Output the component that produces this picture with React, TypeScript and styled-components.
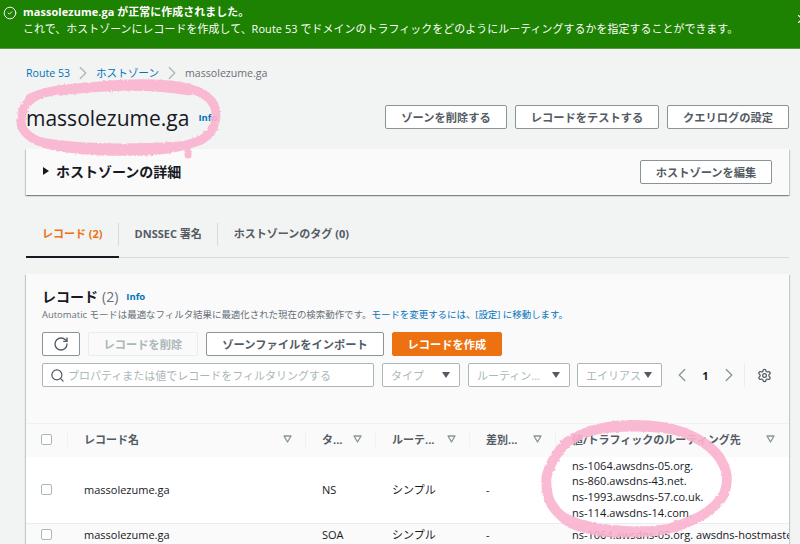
// App.tsx
import React from "react";
import styled, { createGlobalStyle } from "styled-components";
import { ChevronLeft, ChevronRight, CircleCheck, RotateCw, Search, Settings, X } from "lucide-react";

const GlobalStyle = createGlobalStyle`
  html, body {
    margin: 0;
    padding: 0;
    background: #f2f3f3;
    font-family: "Open Sans", "Noto Sans CJK JP", sans-serif;
    color: #16191f;
  }
  * { box-sizing: border-box; }
`;

const Page = styled.div`
  position: relative;
  width: 800px;
  height: 544px;
  overflow: hidden;
`;

const Banner = styled.div`
  display: flex;
  height: 49px;
  padding: 3px 0 0 3px;
  background: #1d8102;
  border-bottom: 1px solid #5c9a4b;
  color: #fff;
  overflow: hidden;
`;

const BannerIcon = styled.div`
  display: flex;
  flex: none;
  width: 20px;
  padding-top: 3px;
`;

const BannerText = styled.div`
  flex: 1;
  font-size: 10.9px;
  line-height: 17px;
  letter-spacing: 0.1px;
`;

const BannerTitle = styled.div`
  font-weight: 700;
`;

const BannerClose = styled.div`
  flex: none;
  width: 5px;
  padding-top: 6px;
  overflow: hidden;
`;

const Main = styled.div`
  padding: 0 11px 0 26px;
`;

const Breadcrumb = styled.nav`
  display: flex;
  align-items: center;
  height: 46px;
  padding-top: 1px;
  font-size: 10.6px;
  color: #687078;
`;

const Crumb = styled.span`
  color: #0073bb;
`;

const CrumbArrow = styled(ChevronRight)`
  width: 22px;
  height: 22px;
  margin: 0 2px;
  color: #aab7b8;
  stroke-width: 1.4;
`;

const HeaderRow = styled.div`
  display: flex;
  align-items: center;
  height: 34px;
  margin-top: 5px;
  gap: 8px;
`;

const PageTitle = styled.h1`
  margin: 2px 0 0;
  font-size: 21px;
  font-weight: 400;
  line-height: 34px;
  color: #16191f;
`;

const InfoLink = styled.a`
  color: #0073bb;
  font-size: 9.5px;
  font-weight: 700;
`;

const TitleGroup = styled.div`
  display: flex;
  align-items: center;
  gap: 9px;
  flex: 1;
`;

const Button = styled.button<{ $width: number }>`
  display: flex;
  flex: none;
  align-items: center;
  justify-content: center;
  width: ${(p) => p.$width}px;
  height: 24px;
  padding: 0;
  background: #fff;
  border: 1px solid #879596;
  border-radius: 2px;
  font-family: inherit;
  font-size: 11.25px;
  font-weight: 700;
  color: #545b64;
`;

const DisabledButton = styled(Button)`
  background: #fafafa;
  border-color: #eaeded;
  color: #aab7b8;
`;

const PrimaryButton = styled(Button)`
  background: #ec7211;
  border-color: #ec7211;
  color: #fff;
`;

const DetailsCard = styled.section`
  display: flex;
  align-items: center;
  justify-content: space-between;
  height: 46px;
  margin-top: 15px;
  padding: 0 17px;
  background: #fafafa;
  box-shadow: 0 1px 1px 0 rgba(0, 28, 36, 0.3), 1px 1px 1px 0 rgba(0, 28, 36, 0.15), -1px 1px 1px 0 rgba(0, 28, 36, 0.15);
`;

const DetailsTitle = styled.h2`
  display: flex;
  align-items: center;
  gap: 7px;
  margin: 0;
  padding-bottom: 2px;
  font-size: 14px;
  font-weight: 700;
  color: #16191f;
`;

const Caret = styled.span`
  width: 0;
  height: 0;
  border-left: 6px solid #16191f;
  border-top: 4px solid transparent;
  border-bottom: 4px solid transparent;
`;

const Tabs = styled.div`
  display: flex;
  height: 35px;
  margin-top: 28px;
  border-bottom: 1px solid #d5dbdb;
`;

const Tab = styled.div<{ $active?: boolean; $last?: boolean }>`
  position: relative;
  height: 35px;
  padding: 1px 16px 0;
  font-size: 11px;
  font-weight: 700;
  line-height: 20px;
  color: ${(p) => (p.$active ? "#ec7211" : "#545b64")};
  border-bottom: 2px solid ${(p) => (p.$active ? "#16191f" : "transparent")};

  ${(p) =>
    !p.$last &&
    `&::after {
      content: "";
      position: absolute;
      right: 0;
      top: 0;
      height: 23px;
      width: 1px;
      background: #d5dbdb;
    }`}
`;

const RecordsCard = styled.section`
  height: 280px;
  margin-top: 16px;
  background: #fafafa;
  box-shadow: 0 1px 1px 0 rgba(0, 28, 36, 0.3), 1px 1px 1px 0 rgba(0, 28, 36, 0.15), -1px 1px 1px 0 rgba(0, 28, 36, 0.15);
  overflow: hidden;
`;

const CardHead = styled.div`
  padding: 12px 16px 0;
`;

const CardTitle = styled.div`
  display: flex;
  align-items: center;
  height: 20px;
  font-size: 14px;
  font-weight: 700;
  color: #16191f;
`;

const Count = styled.span`
  margin-left: 4px;
  font-weight: 400;
  color: #687078;
`;

const CardInfo = styled(InfoLink)`
  margin-left: 8px;
`;

const Description = styled.p`
  margin: 0;
  font-size: 9.45px;
  line-height: 17px;
  color: #687078;
  white-space: nowrap;
`;

const Link = styled.span`
  color: #0073bb;
`;

const Actions = styled.div`
  display: flex;
  gap: 8px;
  margin-top: 9px;
`;

const Filters = styled.div`
  display: flex;
  align-items: center;
  margin-top: 7px;
  height: 24px;
`;

const SearchBox = styled.div`
  display: flex;
  flex: none;
  align-items: center;
  gap: 3px;
  width: 332px;
  height: 24px;
  padding: 0 7px;
  background: #fff;
  border: 1px solid #aab7b8;
  border-radius: 2px;
  font-size: 11px;
  color: #aab7b8;
`;

const SelectBox = styled.div<{ $width: number; $gap: number }>`
  display: flex;
  flex: none;
  align-items: center;
  justify-content: space-between;
  width: ${(p) => p.$width}px;
  height: 24px;
  margin-left: ${(p) => p.$gap}px;
  padding: 0 9px 0 8px;
  background: #fff;
  border: 1px solid #aab7b8;
  border-radius: 2px;
  font-size: 11px;
  color: #aab7b8;
  white-space: nowrap;
`;

const SolidArrow = styled.span`
  flex: none;
  width: 0;
  height: 0;
  border-top: 6px solid #545b64;
  border-left: 4px solid transparent;
  border-right: 4px solid transparent;
`;

const Pager = styled.div`
  display: flex;
  flex: none;
  align-items: center;
  margin-left: 9px;
  color: #879596;
`;

const PageNumber = styled.span`
  width: 25px;
  text-align: center;
  font-size: 11px;
  font-weight: 700;
  color: #16191f;
`;

const PagerDivider = styled.div`
  flex: none;
  width: 1px;
  height: 24px;
  margin: 0 12px 0 4px;
  background: #eaeded;
`;

const GearIcon = styled(Settings)`
  flex: none;
  width: 15px;
  height: 15px;
  color: #545b64;
`;

const Table = styled.div`
  margin-top: 36px;
`;

const COLUMNS = "42px 238px 70px 94px 86px 1fr";

const HeaderCells = styled.div`
  display: grid;
  grid-template-columns: ${COLUMNS};
  height: 34px;
  padding-bottom: 3px;
  align-items: center;
  background: #fafafa;
  border-top: 1px solid #f0f1f1;
`;

const HeadCell = styled.div<{ $last?: boolean }>`
  display: flex;
  align-items: center;
  justify-content: space-between;
  height: 16px;
  padding: 0 ${(p) => (p.$last ? 14 : 13)}px 0 16px;
  border-right: ${(p) => (p.$last ? "none" : "1px solid #f0f1f1")};
  font-size: 11px;
  font-weight: 700;
  color: #545b64;
  white-space: nowrap;
`;

const CheckCell = styled.div<{ $line?: boolean }>`
  height: 16px;
  display: flex;
  align-items: center;
  padding-left: 15px;
  border-right: ${(p) => (p.$line ? "1px solid #f0f1f1" : "none")};
`;

const CheckBox = styled.span`
  display: block;
  width: 11px;
  height: 11px;
  background: #fff;
  border: 1px solid #aab7b8;
  border-radius: 2px;
`;

const Row = styled.div<{ $height: number; $alt?: boolean }>`
  display: grid;
  grid-template-columns: ${COLUMNS};
  align-items: center;
  height: ${(p) => p.$height}px;
  padding-bottom: 2px;
  background: ${(p) => (p.$alt ? "#fafafa" : "#fff")};
  border-bottom: 1px solid #eaeded;
  overflow: hidden;
`;

const Cell = styled.div`
  padding-left: 16px;
  font-size: 11px;
  color: #16191f;
  white-space: nowrap;
`;

const ValueCell = styled(Cell)`
  line-height: 15.7px;
`;

const Scribble = styled.svg`
  position: absolute;
  left: 0;
  top: 0;
  width: 800px;
  height: 544px;
  pointer-events: none;
`;

const SortIcon = () => (
  <svg width="9" height="8" viewBox="0 0 9 8" fill="none">
    <path d="M1 1h7L4.5 7z" stroke="#879596" strokeWidth="1.3" strokeLinejoin="round" />
  </svg>
);

const App: React.FC = () => {
  return (
    <Page>
      <GlobalStyle />
      <Banner>
        <BannerIcon>
          <CircleCheck size={14} strokeWidth={1.6} />
        </BannerIcon>
        <BannerText>
          <BannerTitle>massolezume.ga が正常に作成されました。</BannerTitle>
          <div>これで、ホストゾーンにレコードを作成して、Route 53 でドメインのトラフィックをどのようにルーティングするかを指定することができます。</div>
        </BannerText>
        <BannerClose>
          <X size={14} />
        </BannerClose>
      </Banner>
      <Main>
        <Breadcrumb>
          <Crumb>Route 53</Crumb>
          <CrumbArrow />
          <Crumb>ホストゾーン</Crumb>
          <CrumbArrow />
          <span>massolezume.ga</span>
        </Breadcrumb>
        <HeaderRow>
          <TitleGroup>
            <PageTitle>massolezume.ga</PageTitle>
            <InfoLink>Info</InfoLink>
          </TitleGroup>
          <Button $width={122}>ゾーンを削除する</Button>
          <Button $width={144}>レコードをテストする</Button>
          <Button $width={122}>クエリログの設定</Button>
        </HeaderRow>
        <DetailsCard>
          <DetailsTitle>
            <Caret />
            ホストゾーンの詳細
          </DetailsTitle>
          <Button $width={132}>ホストゾーンを編集</Button>
        </DetailsCard>
        <Tabs>
          <Tab $active>レコード (2)</Tab>
          <Tab>DNSSEC 署名</Tab>
          <Tab $last>ホストゾーンのタグ (0)</Tab>
        </Tabs>
        <RecordsCard>
          <CardHead>
            <CardTitle>
              レコード<Count>(2)</Count>
              <CardInfo>Info</CardInfo>
            </CardTitle>
            <Description>
              Automatic モードは最適なフィルタ結果に最適化された現在の検索動作です。
              <Link>モードを変更するには、[設定] に移動します。</Link>
            </Description>
            <Actions>
              <Button $width={38}>
                <RotateCw size={16} strokeWidth={2} />
              </Button>
              <DisabledButton $width={110}>レコードを削除</DisabledButton>
              <Button $width={178}>ゾーンファイルをインポート</Button>
              <PrimaryButton $width={110}>レコードを作成</PrimaryButton>
            </Actions>
            <Filters>
              <SearchBox>
                <Search size={15} color="#545b64" strokeWidth={2} />
                プロパティまたは値でレコードをフィルタリングする
              </SearchBox>
              <SelectBox $width={78} $gap={8}>
                タイプ
                <SolidArrow />
              </SelectBox>
              <SelectBox $width={102} $gap={8}>
                ルーティン...
                <SolidArrow />
              </SelectBox>
              <SelectBox $width={85} $gap={7}>
                エイリアス
                <SolidArrow />
              </SelectBox>
              <Pager>
                <ChevronLeft size={22} strokeWidth={1.4} />
                <PageNumber>1</PageNumber>
                <ChevronRight size={22} strokeWidth={1.4} />
              </Pager>
              <PagerDivider />
              <GearIcon />
            </Filters>
          </CardHead>
          <Table>
            <HeaderCells>
              <CheckCell $line>
                <CheckBox />
              </CheckCell>
              <HeadCell>
                レコード名
                <SortIcon />
              </HeadCell>
              <HeadCell>
                タ...
                <SortIcon />
              </HeadCell>
              <HeadCell>
                ルーテ...
                <SortIcon />
              </HeadCell>
              <HeadCell>
                差別...
                <SortIcon />
              </HeadCell>
              <HeadCell $last>
                値/トラフィックのルーティング先
                <SortIcon />
              </HeadCell>
            </HeaderCells>
            <Row $height={67}>
              <CheckCell>
                <CheckBox />
              </CheckCell>
              <Cell>massolezume.ga</Cell>
              <Cell>NS</Cell>
              <Cell>シンプル</Cell>
              <Cell>-</Cell>
              <ValueCell>
                ns-1064.awsdns-05.org.
                <br />
                ns-860.awsdns-43.net.
                <br />
                ns-1993.awsdns-57.co.uk.
                <br />
                ns-114.awsdns-14.com.
              </ValueCell>
            </Row>
            <Row $height={23} $alt>
              <CheckCell>
                <CheckBox />
              </CheckCell>
              <Cell>massolezume.ga</Cell>
              <Cell>SOA</Cell>
              <Cell>シンプル</Cell>
              <Cell>-</Cell>
              <Cell>ns-1064.awsdns-05.org. awsdns-hostmaster.amazon.com.</Cell>
            </Row>
          </Table>
        </RecordsCard>
      </Main>
      <Scribble viewBox="0 0 800 544" fill="none">
        <defs>
          <filter id="rough" x="-5%" y="-5%" width="110%" height="110%">
            <feTurbulence type="fractalNoise" baseFrequency="0.35" numOctaves="2" seed="4" />
            <feDisplacementMap in="SourceGraphic" scale="3" />
          </filter>
        </defs>
        <g filter="url(#rough)" stroke="#fbb3cf" strokeLinecap="round" strokeLinejoin="round" opacity="0.9">
          <path
            d="M30 98 C52 88 76 88 100 86 C130 83 160 83 183 87 C203 91 216 100 216 114 C216 128 208 138 196 142 C176 149 154 152 133 151 C104 152 74 150 50 145 C34 141 21 133 21 122 C21 110 26 101 38 95"
            strokeWidth="9"
          />
          <path d="M60 92 C100 87 150 85 190 92 M40 141 C80 148 130 148 180 145 M188 148 L188 155" strokeWidth="7" />
          <path
            d="M567 442 C586 430 610 425 633 425 C652 425 670 427 685 433 C702 440 716 450 722 462 C728 472 728 484 724 494 C716 508 700 518 683 524 C668 530 654 532 640 532 C626 533 612 533 600 531 C586 529 574 526 566 520 C556 512 550 504 548 496 C546 486 545 478 548 472 C551 462 557 452 567 442"
            strokeWidth="10"
          />
          <path d="M575 436 C600 428 640 425 680 432 M556 510 C575 527 620 532 660 529" strokeWidth="7" />
        </g>
      </Scribble>
    </Page>
  );
};

export default App;
